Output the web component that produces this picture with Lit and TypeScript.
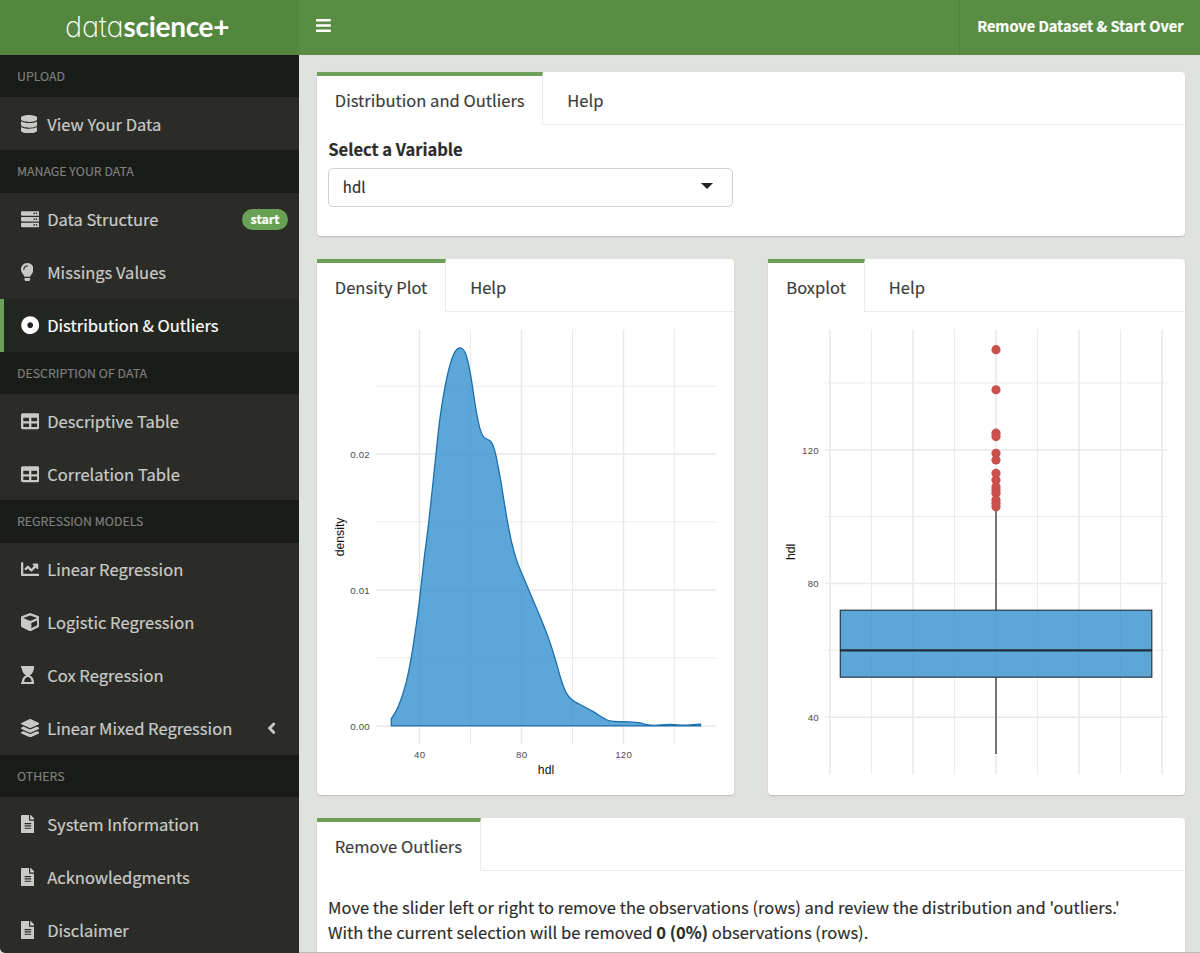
import { LitElement, html, svg, css } from "lit";
import { customElement, property } from "lit/decorators.js";

const bar = (y: number) =>
  `M480 ${y + 128}H32c-17.673 0-32-14.327-32-32v-64c0-17.673 14.327-32 32-32h448c17.673 0 32 14.327 32 32v64c0 17.673-14.327 32-32 32zm-48-88c-13.255 0-24 10.745-24 24s10.745 24 24 24 24-10.745 24-24-10.745-24-24-24zm-64 0c-13.255 0-24 10.745-24 24s10.745 24 24 24 24-10.745 24-24-10.745-24-24-24z`;

const ICONS: Record<string, [number, string]> = {
  bars: [448, "M16 132h416c8.8 0 16-7.2 16-16V76c0-8.800-7.200-16-16-16H16C7.200 60 0 67.200 0 76v40c0 8.800 7.200 16 16 16zm0 160h416c8.800 0 16-7.200 16-16v-40c0-8.800-7.200-16-16-16H16c-8.800 0-16 7.200-16 16v40c0 8.800 7.200 16 16 16zm0 160h416c8.800 0 16-7.200 16-16v-40c0-8.800-7.200-16-16-16H16c-8.800 0-16 7.200-16 16v40c0 8.800 7.200 16 16 16z"],
  database: [448, "M448 73.143v45.714C448 159.143 347.667 192 224 192S0 159.143 0 118.857V73.143C0 32.857 100.333 0 224 0s224 32.857 224 73.143zM448 176v102.857C448 319.143 347.667 352 224 352S0 319.143 0 278.857V176c48.125 33.143 136.208 48.572 224 48.572S399.874 209.143 448 176zm0 160v102.857C448 479.143 347.667 512 224 512S0 479.143 0 438.857V336c48.125 33.143 136.208 48.572 224 48.572S399.874 369.143 448 336z"],
  server: [512, bar(32) + bar(192) + bar(352)],
  bulb: [352, "M96.060 454.350c.01 6.290 1.870 12.450 5.360 17.690l17.090 25.690a31.990 31.990 0 0 0 26.640 14.280h61.710a31.990 31.990 0 0 0 26.640-14.280l17.090-25.690a31.989 31.989 0 0 0 5.360-17.690l.04-38.350H96.010l.05 38.350zM0 176c0 44.370 16.450 84.850 43.560 115.780 16.520 18.850 42.360 58.230 52.210 91.450.04.26.07.52.11.78h160.240c.04-.26.07-.51.11-.78 9.850-33.220 35.690-72.600 52.210-91.450C335.550 260.850 352 220.370 352 176 352 78.610 272.910-.3 175.450 0 73.440.31 0 82.970 0 176zm176-80c-44.110 0-80 35.890-80 80 0 8.840-7.160 16-16 16s-16-7.160-16-16c0-61.760 50.240-112 112-112 8.840 0 16 7.160 16 16s-7.160 16-16 16z"],
  dot: [512, "M256 8C119.033 8 8 119.033 8 256s111.033 248 248 248 248-111.033 248-248S392.967 8 256 8zm80 248c0 44.112-35.888 80-80 80s-80-35.888-80-80 35.888-80 80-80 80 35.888 80 80z"],
  table: [512, "M464 32H48C21.490 32 0 53.490 0 80v352c0 26.510 21.490 48 48 48h416c26.510 0 48-21.490 48-48V80c0-26.510-21.490-48-48-48zM224 416H64v-96h160v96zm0-160H64v-96h160v96zm224 160H288v-96h160v96zm0-160H288v-96h160v96z"],
  chart: [512, "M496 384H64V80c0-8.840-7.160-16-16-16H16C7.160 64 0 71.160 0 80v336c0 17.670 14.330 32 32 32h464c8.840 0 16-7.160 16-16v-32c0-8.840-7.160-16-16-16zM464 96H345.940c-21.380 0-32.090 25.850-16.970 40.970l32.400 32.400L288 242.750l-73.370-73.370c-12.500-12.500-32.760-12.500-45.250 0l-68.690 68.690c-6.250 6.250-6.250 16.380 0 22.630l22.620 22.620c6.250 6.250 16.380 6.250 22.630 0L192 237.250l73.370 73.370c12.500 12.500 32.760 12.500 45.250 0l96-96 32.400 32.400c15.120 15.120 40.970 4.410 40.970-16.970V112c.01-8.840-7.150-16-15.990-16z"],
  cube: [512, "M239.100 6.300l-208 78c-18.700 7-31.100 25-31.100 45v225.100c0 18.200 10.300 34.800 26.500 42.900l208 104c13.500 6.800 29.400 6.800 42.900 0l208-104c16.300-8.100 26.500-24.800 26.500-42.900V129.300c0-20-12.400-37.900-31.100-44.900l-208-78C262 2.200 250 2.200 239.100 6.300zM256 68.400l192 72v1.100l-192 78-192-78v-1.100l192-72zm32 356V275.500l160-65v133.900l-160 80z"],
  hourglass: [384, "M360 0H24C10.745 0 0 10.745 0 24v16c0 13.255 10.745 24 24 24 0 90.965 51.016 167.734 120.842 192C75.016 280.266 24 357.035 24 448c-13.255 0-24 10.745-24 24v16c0 13.255 10.745 24 24 24h336c13.255 0 24-10.745 24-24v-16c0-13.255-10.745-24-24-24 0-90.965-51.016-167.734-120.842-192C308.984 231.734 360 154.965 360 64c13.255 0 24-10.745 24-24V24c0-13.255-10.745-24-24-24zm-64 448H88c0-77.458 46.204-144 104-144 57.786 0 104 66.517 104 144z"],
  layers: [512, "M12.410 148.020l232.940 105.670c6.800 3.090 14.490 3.090 21.290 0l232.940-105.670c16.550-7.510 16.550-32.520 0-40.030L266.650 2.310a25.607 25.607 0 0 0-21.290 0L12.410 107.980c-16.550 7.510-16.550 32.530 0 40.040zm487.180 88.280l-58.090-26.330-161.640 73.270c-7.560 3.430-15.590 5.170-23.860 5.170s-16.290-1.740-23.860-5.170L70.510 209.970l-58.100 26.330c-16.550 7.500-16.550 32.500 0 40l232.940 105.590c6.800 3.080 14.490 3.080 21.290 0L499.590 276.300c16.550-7.500 16.550-32.500 0-40zm0 127.800l-57.870-26.230-161.860 73.370c-7.560 3.430-15.590 5.170-23.860 5.170s-16.290-1.740-23.860-5.170L70.290 337.870 12.410 364.100c-16.550 7.500-16.550 32.500 0 40l232.940 105.590c6.800 3.080 14.490 3.080 21.290 0L499.590 404.100c16.550-7.500 16.550-32.500 0-40z"],
  file: [384, "M224 136V0H24C10.700 0 0 10.700 0 24v464c0 13.300 10.700 24 24 24h336c13.300 0 24-10.700 24-24V160H248c-13.200 0-24-10.800-24-24zm64 236c0 6.600-5.400 12-12 12H108c-6.600 0-12-5.400-12-12v-8c0-6.600 5.400-12 12-12h168c6.600 0 12 5.400 12 12v8zm0-64c0 6.600-5.400 12-12 12H108c-6.600 0-12-5.400-12-12v-8c0-6.600 5.400-12 12-12h168c6.600 0 12 5.400 12 12v8zm0-72v8c0 6.600-5.400 12-12 12H108c-6.600 0-12-5.400-12-12v-8c0-6.600 5.400-12 12-12h168c6.600 0 12 5.400 12 12zm96-114.100v6.100H256V0h6.100c6.400 0 12.500 2.500 17 7l97.900 98c4.500 4.500 7 10.600 7 16.900z"],
  angle: [256, "M31.700 239l136-136c9.400-9.400 24.600-9.400 33.900 0l22.600 22.600c9.400 9.400 9.400 24.600 0 33.900L127.900 256l96.400 96.400c9.400 9.400 9.400 24.600 0 33.900L201.700 409c-9.400 9.400-24.600 9.400-33.900 0l-136-136c-9.500-9.400-9.500-24.600-.1-34z"],
};

@customElement("fa-icon")
class FaIcon extends LitElement {
  static styles = css`
    :host { display: block; height: 18.4px; }
    svg { display: block; height: 100%; fill: currentColor; }
  `;
  @property() name = "file";
  render() {
    const [w, d] = ICONS[this.name];
    return html`<svg viewBox="0 0 ${w} 512"><path fill-rule="evenodd" d=${d}></path></svg>`;
  }
}

@customElement("tab-card")
class TabCard extends LitElement {
  static styles = css`
    :host {
      display: flex; flex-direction: column; background: #fff;
      border-radius: 4px; box-shadow: 0 1px 1.5px rgba(0, 0, 0, 0.16);
    }
    .tabs {
      display: flex; height: 53px; flex: none; color: #3c3c3c; font-size: 16.55px; line-height: 25px;
      -webkit-text-stroke: 0.15px currentColor;
    }
    .tab { padding: 16.4px 24px 0; border-bottom: 1px solid #ececec; box-sizing: border-box; white-space: nowrap; }
    .tab.active {
      padding: 12.4px 17.8px 0 18.3px; border-top: 4px solid #6ba056;
      border-right: 1px solid #ececec; border-bottom: 0;
    }
    .rest { flex: 1; border-bottom: 1px solid #ececec; }
  `;
  @property({ type: Array }) tabs: string[] = [];
  render() {
    return html`
      <div class="tabs">
        ${this.tabs.map((t, i) => html`<div class="tab ${i ? "" : "active"}">${t}</div>`)}
        <div class="rest"></div>
      </div>
      <slot></slot>
    `;
  }
}

const curve: [number, number][] = [
  [391.3, 718.7], [398.3, 706.7], [406, 683.3], [411.7, 655], [416.7, 622], [419.7, 598.3], [424, 560], [429, 520],
  [436, 454], [440, 418], [445, 387], [450, 365], [455, 352], [460, 348], [465, 352.3], [468.3, 363.3],
  [471.7, 381.7], [475.7, 408.3], [480, 429], [484, 437.500], [490.7, 441.5], [495, 451.7], [500, 476.7],
  [504.5, 504], [507.5, 522], [512, 544], [516.7, 560.500], [521.7, 573.3], [531.7, 597], [540, 616.7],
  [547.7, 636], [555, 658.300], [560.7, 678.3], [566, 692.7], [572.3, 700], [583.3, 706.3], [593.3, 711.7],
  [604, 718.500], [611.7, 721.3], [630, 722], [640, 723], [646.7, 724.800], [655, 725.5], [670, 724.5],
  [685, 725.300], [700.5, 724.3],
];

function smooth(p: [number, number][]): string {
  let d = `M${p[0][0]} ${p[0][1]}`;
  for (let i = 0; i < p.length - 1; i++) {
    const a = p[Math.max(i - 1, 0)], b = p[i], c = p[i + 1], e = p[Math.min(i + 2, p.length - 1)];
    d += `C${b[0] + (c[0] - a[0]) / 6} ${b[1] + (c[1] - a[1]) / 6} ${c[0] - (e[0] - b[0]) / 6} ${c[1] - (e[1] - b[1]) / 6} ${c[0]} ${c[1]}`;
  }
  return d;
}

const grid = (xs: number[], ys: number[], x0: number, x1: number, y0: number, y1: number, w: number) => svg`
  <path fill="none" stroke="#e9e9e9" stroke-width=${w}
    d=${xs.map((x) => `M${x} ${y0}V${y1}`).join("") + ys.map((y) => `M${x0} ${y}H${x1}`).join("")}></path>`;

const outliers = [150, 138, 125, 124, 119, 117, 113, 111, 109, 108, 107, 105, 104, 103];

const menu: (string | [string, string])[] = [
  "UPLOAD", ["database", "View Your Data"],
  "MANAGE YOUR DATA", ["server", "Data Structure"], ["bulb", "Missings Values"], ["dot", "Distribution & Outliers"],
  "DESCRIPTION OF DATA", ["table", "Descriptive Table"], ["table", "Correlation Table"],
  "REGRESSION MODELS", ["chart", "Linear Regression"], ["cube", "Logistic Regression"],
  ["hourglass", "Cox Regression"], ["layers", "Linear Mixed Regression"],
  "OTHERS", ["file", "System Information"], ["file", "Acknowledgments"], ["file", "Disclaimer"],
];

@customElement("app-root")
class AppRoot extends LitElement {
  static styles = css`
    :host {
      display: grid; grid-template: 54.5px 898.5px / 299px 901px;
      width: 1200px; height: 953px; overflow: hidden; background: #e0e2de;
      font-family: "Noto Sans CJK SC", "Noto Sans", sans-serif;
    }
    .logo {
      background: #54873e; color: #fff; display: flex; align-items: baseline;
      padding: 7px 0 0 65px; box-sizing: border-box; line-height: 38px; white-space: nowrap;
    }
    .thin { font: 200 29px/38px Inter, sans-serif; font-feature-settings: "cv11"; letter-spacing: -0.15px; }
    .bold { font: 700 28px/38px Lato, sans-serif; letter-spacing: -0.3px; }
    .nav {
      background: #5a8d44; color: #fff; display: flex; justify-content: space-between;
      align-items: center; padding-left: 17px;
    }
    .nav fa-icon { height: 17px; margin-top: -3px; }
    .reset {
      border-left: 1px solid #52813e; height: 100%; box-sizing: border-box; padding: 0 16.5px 0 17px;
      font-size: 14.55px; font-weight: 700; line-height: 51px; white-space: nowrap;
      -webkit-text-stroke: 0.2px currentColor;
    }
    .side {
      background: #2b2c28; color: #c9cac6; overflow: hidden; border-radius: 0 0 0 5px;
      -webkit-text-stroke: 0.2px currentColor;
    }
    .head {
      height: 42.5px; line-height: 43.6px; background: #191b18; color: #7d7f7b;
      font-size: 12.35px; padding-left: 17px; box-sizing: border-box;
    }
    .item {
      height: 53px; display: flex; align-items: center; font-size: 16.55px;
      padding: 0 11px 0 20.5px; box-sizing: border-box;
    }
    .item.active { background: #242622; color: #fff; border-left: 4px solid #6ba056; padding-left: 16.5px; }
    .glyph { width: 26.7px; padding-top: 0.5px; }
    .label { flex: 1; white-space: nowrap; line-height: 24px; }
    .badge {
      background: #67a254; color: #fff; border-radius: 11px; height: 21px; line-height: 20px;
      width: 46px; text-align: center; font-size: 12.5px; font-weight: 700; margin-top: 1px;
    }
    .chev { margin-right: 11.5px; }
    .main {
      display: grid; grid-template: 163.5px 536.5px 200px / 417px 417px; gap: 23px 34.5px;
      padding: 17.5px 0 0 17.5px; overflow: hidden; color: #2c2c2c; border-bottom: 1px solid #b9bab8;
      box-sizing: border-box;
    }
    .wide { grid-column: 1 / 3; }
    .form { padding: 11px 11.8px 0; font-size: 16.55px; }
    .caption { font-weight: 700; line-height: 26px; -webkit-text-stroke: 0.2px currentColor; }
    .select {
      width: 405px; height: 39.5px; margin-top: 5.5px; border: 1.5px solid #d2d2d2; border-radius: 5px;
      box-sizing: border-box; display: flex; align-items: center; justify-content: space-between;
      padding: 0 19.5px 1px 13.5px; font-size: 15px; -webkit-text-stroke: 0.15px currentColor;
    }
    .caret { border: 6px solid transparent; border-top-color: #222; border-bottom: 0; margin-top: -1px; }
    .plot { display: block; width: 417px; height: 483.5px; font-family: "Liberation Sans", Arial, sans-serif; }
    .tick { font-size: 9.7px; fill: #4d4d4d; letter-spacing: 0.25px; }
    .axis { font-size: 12.2px; fill: #111; }
    .note {
      padding: 23.8px 11.5px 0; font-size: 16.55px; line-height: 25.4px; white-space: nowrap;
      -webkit-text-stroke: 0.15px currentColor;
    }
  `;

  density() {
    const line = smooth(curve);
    return html`<svg class="plot" viewBox="317 312.100 417 483.5">
      ${grid([470.5, 572.5, 674.7], [386.3, 522, 658], 376, 716, 329.5, 744.5, 0.9)}
      ${grid([419.5, 521.5, 623.5], [454, 590, 726], 376, 716, 329.5, 744.5, 1.5)}
      <path d="${line}V726H391.3Z" fill="#3490ce" fill-opacity="0.8" stroke="#1c6fae" stroke-width="1.3"></path>
      <g class="tick" text-anchor="end">
        <text x="370" y="457.800">0.02</text><text x="370" y="593.800">0.01</text><text x="370" y="729.800">0.00</text>
      </g>
      <g class="tick" text-anchor="middle">
        <text x="419.7" y="758.500">40</text><text x="521.7" y="758.500">80</text><text x="623.7" y="758.500">120</text>
      </g>
      <text class="axis" text-anchor="middle" x="546" y="774">hdl</text>
      <text class="axis" text-anchor="middle" transform="translate(343.800 537) rotate(-90)">density</text>
    </svg>`;
  }

  boxplot() {
    return html`<svg class="plot" viewBox="768 312.100 417 483.5">
      ${grid([871.5, 954.5, 1037.5, 1120.5], [383, 516.8, 650.3], 825, 1167, 329.5, 774.5, 0.9)}
      ${grid([830, 913, 996, 1079, 1162], [450, 583.5, 717.3], 825, 1167, 329.5, 774.5, 1.5)}
      <path d="M996 506V610M996 677V754" stroke="#444" stroke-width="1.4"></path>
      ${outliers.map((v) => svg`<circle cx="996" cy=${450 - (v - 120) * 3.342} r="4.6" fill="#c9504b"></circle>`)}
      <rect x="840.3" y="610.300" width="311.500" height="67" fill="#3490ce" fill-opacity="0.8" stroke="#263746" stroke-width="1.2"></rect>
      <path d="M840 650.500H1152" stroke="#202c36" stroke-width="2.4"></path>
      <g class="tick" text-anchor="end">
        <text x="819" y="453.900">120</text><text x="819" y="587.300">80</text><text x="819" y="721">40</text>
      </g>
      <text class="axis" text-anchor="middle" transform="translate(794.800 552) rotate(-90)">hdl</text>
    </svg>`;
  }

  render() {
    return html`
      <div class="logo"><span class="thin">data</span><span class="bold">science+</span></div>
      <div class="nav">
        <fa-icon name="bars"></fa-icon>
        <div class="reset">Remove Dataset &amp; Start Over</div>
      </div>
      <div class="side">
        ${menu.map((m) =>
          typeof m === "string"
            ? html`<div class="head">${m}</div>`
            : html`<div class="item ${m[0] === "dot" ? "active" : ""}">
                <div class="glyph"><fa-icon name=${m[0]}></fa-icon></div>
                <div class="label">${m[1]}</div>
                ${m[0] === "server" ? html`<div class="badge">start</div>` : ""}
                ${m[0] === "layers" ? html`<fa-icon class="chev" name="angle"></fa-icon>` : ""}
              </div>`
        )}
      </div>
      <div class="main">
        <tab-card class="wide" .tabs=${["Distribution and Outliers", "Help"]}>
          <div class="form">
            <div class="caption">Select a Variable</div>
            <div class="select"><span>hdl</span><span class="caret"></span></div>
          </div>
        </tab-card>
        <tab-card .tabs=${["Density Plot", "Help"]}>${this.density()}</tab-card>
        <tab-card .tabs=${["Boxplot", "Help"]}>${this.boxplot()}</tab-card>
        <tab-card class="wide" .tabs=${["Remove Outliers"]}>
          <div class="note">
            Move the slider left or right to remove the observations (rows) and review the distribution and 'outliers.'<br />
            With the current selection will be removed <b>0 (0%)</b> observations (rows).
          </div>
        </tab-card>
      </div>
    `;
  }
}
